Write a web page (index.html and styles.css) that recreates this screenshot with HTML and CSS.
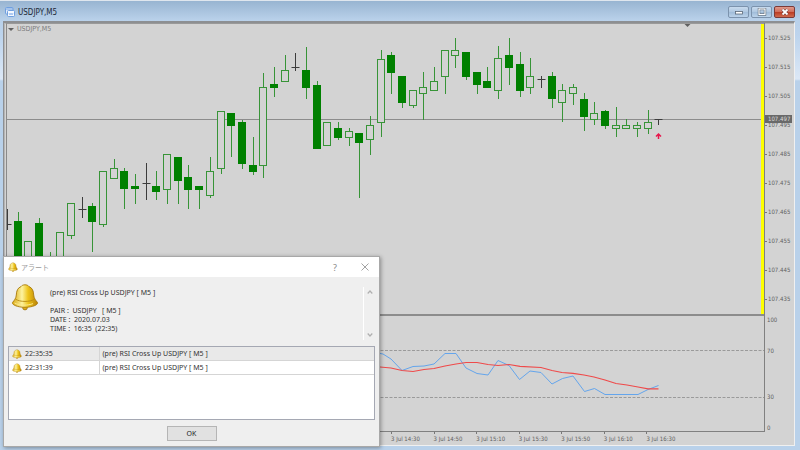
FILE: index.html
```html
<!DOCTYPE html>
<html lang="ja">
<head>
<meta charset="utf-8">
<title>USDJPY,M5</title>
<link rel="stylesheet" href="styles.css">
</head>
<body>
<svg class="defs" aria-hidden="true">
  <defs>
    <linearGradient id="gold" x1="0" x2="1">
      <stop offset="0" stop-color="#d9a60c"/>
      <stop offset=".38" stop-color="#fdf3a0"/>
      <stop offset=".62" stop-color="#eec41a"/>
      <stop offset="1" stop-color="#b98207"/>
    </linearGradient>
    <symbol id="bell" viewBox="0 0 28 28">
      <circle cx="14" cy="24.5" r="2.4" fill="#e0ac14" stroke="#9a6d0a" stroke-width=".8"/>
      <path d="M10 3.6C11.5 1.2 16.5 1.2 18 3.6C21.5 5 22.5 8 22.7 12C23 15.500 24.500 17 26.500 19.500C27.500 21.500 22 24.300 14 24.300C6 24.300 .5 21.500 1.500 19.500C3.500 17 5 15.500 5.300 12C5.500 8 6.500 5 10 3.600Z" fill="url(#gold)" stroke="#a87a10" stroke-width=".9"/>
      <path d="M4.600 16.200C9 19.200 19 19.200 23.400 16.200" fill="none" stroke="#b98a12" stroke-width=".9"/>
      <path d="M3.500 20C9 22.800 17 22.600 22 20.600" fill="none" stroke="#fbe88a" stroke-width="1"/>
    </symbol>
  </defs>
</svg>

<main class="window">
  <header class="titlebar">
    <svg class="app-icon" viewBox="0 0 10 10" aria-hidden="true">
      <rect x=".5" y=".5" width="7.500" height="6.500" rx="1" fill="#dfeafa" stroke="#6f9fdf"/>
      <path d="M1 2H8" stroke="#6f9fdf"/>
      <rect x="2.500" y="3.500" width="7" height="6" rx="1" fill="#f4f8ff" stroke="#6f9fdf"/>
      <path d="M4 6L5 8L6 6L7 8L8 6" fill="none" stroke="#8db4ea" stroke-width=".8"/>
    </svg>
    <h1>USDJPY,M5</h1>
    <div class="controls">
      <button type="button" aria-label="Minimize"><svg viewBox="0 0 10 8"><rect x="1.500" y="3.500" width="7" height="2.500" fill="#fff" stroke="#596675" stroke-width=".8"/></svg></button>
      <button type="button" aria-label="Maximize"><svg viewBox="0 0 10 8"><rect x="2" y="1" width="6" height="5.500" fill="none" stroke="#596675" stroke-width="2.400"/><rect x="2" y="1" width="6" height="5.500" fill="none" stroke="#fff" stroke-width="1.200"/></svg></button>
      <button type="button" class="close" aria-label="Close"><svg viewBox="0 0 10 8"><path d="M2.500 1.500L7.500 6.500M7.500 1.500L2.500 6.500" stroke="#6b3a3a" stroke-width="3"/><path d="M2.500 1.500L7.500 6.500M7.500 1.500L2.500 6.500" stroke="#fff" stroke-width="1.800"/></svg></button>
    </div>
  </header>

  <section class="frame">
    <div class="plot price">
      <svg id="price-plot" viewBox="7 24 757 290" preserveAspectRatio="xMinYMin meet" role="img" aria-label="USDJPY M5 candlesticks"></svg>
      <div class="symbol"><i></i>USDJPY,M5</div>
    </div>
    <ol class="scale prices">
      <li>107.525</li><li>107.515</li><li>107.505</li>
      <li>107.495<b>107.497</b></li>
      <li>107.485</li><li>107.475</li><li>107.465</li><li>107.455</li><li>107.445</li><li>107.435</li>
    </ol>
    <div class="plot rsi">
      <svg viewBox="7 316 757 116" preserveAspectRatio="xMinYMin meet" role="img" aria-label="RSI and moving average">
        <path d="M7 350.500H764M7 397.500H764" stroke="#9a9a9a" stroke-dasharray="3 1.500" fill="none"/>
        <polyline fill="none" stroke="#64a5ec" points="372,352 383,354 391,359 402,370.500 413,366.500 424,366 434,364 445,353.500 456,353.500 466,368 477,373.500 488,375 498,360.500 509,365.500 519.500,379.500 530,371 541,372.500 552,384 562.500,378.500 573,376 584.500,391.500 594.500,388.500 605,394.500 638,394.500 648,389.500 658.500,385.500"/>
        <polyline fill="none" stroke="#ef4a4a" stroke-width="1.200" points="372,366.500 380,367 391,368 402,370.500 413,371.500 424,369.500 434,368.500 445,366 456,364 466,362.500 477,362.500 488,364.500 498,365.500 509,364.500 520,366.300 541,367.500 552,370.500 562,372.500 573,373.300 584,375 594,377 605,380 616,383.500 627,385 638,387 648,388.800 658.500,388.800"/>
      </svg>
    </div>
    <ol class="scale levels"><li>100</li><li>70</li><li>30</li><li>0</li></ol>
    <ol class="times">
      <li>3 Jul 14:30</li><li>3 Jul 14:50</li><li>3 Jul 15:10</li><li>3 Jul 15:30</li><li>3 Jul 15:50</li><li>3 Jul 16:10</li><li>3 Jul 16:30</li>
    </ol>
  </section>
</main>

<section class="dialog" role="dialog" aria-labelledby="alert-title">
  <header>
    <svg class="bell-small"><use href="#bell"/></svg>
    <h2 id="alert-title">アラート</h2>
    <button type="button" class="help" aria-label="Help">?</button>
    <button type="button" class="dismiss" aria-label="Close"><svg viewBox="0 0 8 8"><path d="M.5 .5L7.500 7.500M7.500 .5L.5 7.500" stroke="#999" stroke-width=".9"/></svg></button>
  </header>
  <div class="message">
    <svg class="bell-large"><use href="#bell"/></svg>
    <pre>(pre) RSI Cross Up USDJPY [ M5 ]

PAIR :  USDJPY   [ M5 ]
DATE :  2020.07.03
TIME :  16:35  (22:35)</pre>
    <div class="scroller">
      <button type="button" aria-label="Scroll up"><svg viewBox="0 0 6 4"><path d="M.7 3.500L3 1L5.300 3.500" fill="none" stroke="#b0b0b0" stroke-width="1.200"/></svg></button>
      <button type="button" aria-label="Scroll down"><svg viewBox="0 0 6 4"><path d="M.7 .5L3 3L5.300 .5" fill="none" stroke="#b0b0b0" stroke-width="1.200"/></svg></button>
    </div>
  </div>
  <div class="log">
    <table>
      <tr class="selected"><td><div class="stamp"><svg class="bell-small"><use href="#bell"/></svg>22:35:35</div></td><td>(pre) RSI Cross Up USDJPY [ M5 ]</td></tr>
      <tr><td><div class="stamp"><svg class="bell-small"><use href="#bell"/></svg>22:31:39</div></td><td>(pre) RSI Cross Up USDJPY [ M5 ]</td></tr>
    </table>
  </div>
  <button type="button" class="ok">OK</button>
</section>
<script src="chart.js"></script>
</body>
</html>
```
FILE: styles.css
```css
* { box-sizing: border-box; }
body {
  margin: 0;
  font: 7px/9px "Noto Sans", "Noto Sans CJK JP", sans-serif;
  color: #333;
}
h1, h2, ol, pre { margin: 0; padding: 0; font: inherit; }
ol { list-style: none; }
button { padding: 0; font: inherit; display: flex; align-items: center; justify-content: center; }
svg { display: block; }
.defs { position: absolute; width: 0; height: 0; }

.window {
  min-height: 100vh;
  display: flex;
  flex-direction: column;
  padding: 0 5px 4px 3px;
  border-top: 1px solid #dfe6ee;
  background: linear-gradient(#98b4d1 0, #b9d1ea 19px, #bdd4ed 35px, #dce8f6 78px, #b9d1ea 80px);
}
.titlebar { display: flex; align-items: center; height: 20px; padding: 2px 0 0 2px; gap: 3px; }
.titlebar h1 { flex: 1; font: 8px/9px "DejaVu Sans Condensed", sans-serif; color: #1c2938; }
.app-icon { width: 10px; height: 10px; }
.controls { display: flex; gap: 2px; }
.controls button {
  width: 21px;
  height: 12px;
  border: 1px solid #7c93ad;
  border-radius: 2px;
  background: linear-gradient(#c9dbee, #aec7e0 50%, #9fbbd8 50%, #bcd3ea);
}
.controls svg { width: 10px; height: 8px; }
.controls .close { border-color: #7b3a38; background: linear-gradient(#e09a8b, #cf6a58 50%, #ba3a22 50%, #d06a4e); }

.frame {
  flex: 1;
  display: grid;
  grid-template-columns: 1fr 30px;
  grid-template-rows: 1fr 118px 13px;
  background: #d3d3d3;
  border: 1px solid #8d8f92;
  border-top-width: 2px;
  border-right-color: #f0f0f0;
  border-bottom-color: #f0f0f0;
  padding-left: 2px;
  box-shadow: inset 1px 1px #b5b5b5;
  font: 6px/8px "DejaVu Sans Condensed", sans-serif;
}
.plot { position: relative; min-width: 0; min-height: 0; overflow: hidden; border-left: 1px solid #8a8a8a; }
.plot svg { width: 100%; }
.price { border-top: 1px solid #999; }
.rsi { border-top: 2px solid #8c8c8c; border-bottom: 1px solid #808080; }
.symbol { position: absolute; left: 1px; top: 1px; display: flex; align-items: center; gap: 3px; font-size: 7px; color: #7c7c7c; }
.symbol i { border: 3px solid transparent; border-top-color: #606060; border-bottom: 0; }

.scale { color: #606060; border-left: 1px solid #808080; }
.prices { display: flex; flex-direction: column; }
.prices li { position: relative; flex: 1; display: flex; align-items: center; padding-left: 3px; }
.prices li::before { content: ""; position: absolute; left: 0; top: 50%; width: 2px; height: 1px; background: #777; }
.prices b { position: absolute; left: 0; top: 5px; height: 8px; padding: 0 2px 0 3px; background: #696969; color: #ddd; font-weight: normal; }
.levels { display: grid; grid-template-rows: 8fr 54fr 38fr 16fr; padding: 2px 0 0 2px; }
.levels li { display: flex; align-items: center; }
.levels li:last-child { align-items: end; }
.times { display: grid; grid-template-columns: repeat(7, 1fr); padding: 0 75px 0 385px; color: #606060; white-space: nowrap; }
.times li { position: relative; padding-top: 3px; }
.times li::before { content: ""; position: absolute; left: 0; top: 0; width: 1px; height: 2px; background: #777; }

.dialog {
  position: absolute;
  left: 3px;
  bottom: 3px;
  width: 377px;
  display: flex;
  flex-direction: column;
  padding-bottom: 5px;
  background: #efefef;
  border: 1px solid #a8a8a8;
  box-shadow: 1px 1px 4px rgba(0, 0, 0, .35);
}
.dialog header { display: flex; align-items: center; height: 20px; padding: 0 4px; background: #fff; }
.dialog h2 { flex: 1; padding-left: 3px; color: #999; }
.dialog button { border: 0; background: none; color: #888; }
.dialog .help { width: 20px; height: 16px; margin-right: 10px; font-size: 9px; }
.dialog .dismiss { width: 20px; height: 16px; }
.dismiss svg { width: 8px; height: 8px; }
.bell-small { width: 10px; height: 10px; }
.bell-large { width: 28px; height: 28px; margin-top: 6px; }
.message { display: flex; height: 69px; padding: 0 4px 0 7px; }
.message pre { flex: 1; padding: 11px 0 0 11px; }
.scroller { display: flex; flex-direction: column; justify-content: space-between; width: 12px; height: 53px; margin-top: 10px; padding: 3px 0; border-left: 1px solid #fff; }
.scroller svg { width: 6px; height: 4px; }
.log { height: 74px; margin: 0 4px; border: 1px solid #a5a8b3; background: #fff; }
.log table { width: 100%; border-collapse: collapse; }
.log tr { border-bottom: 1px solid #d5d5d5; }
.log td { padding: 0 3px; }
.log td:first-child { width: 90px; border-right: 1px solid #d5d5d5; }
.stamp { display: flex; align-items: center; gap: 3px; height: 13px; }
.log .selected { background: #e9e9e9; }
.dialog .ok { align-self: center; width: 50px; height: 15px; margin-top: 6px; border: 1px solid #b5b5b5; background: #e1e1e1; color: #222; }
```
FILE: chart.js
```js
// Each bar: kind (g = down, w = up, k = doji), high, body top, body bottom, low.
const bars = [
  ["k",209,224,224,230],["g",212,221,290,290],["w",241,241,290,290],["g",218,223,290,290],
  ["w",252,262,290,290],["w",232,232,290,290],["w",203,203,235,239],["k",197,209,209,218],
  ["g",203,206,222,252],["w",171,171,224,227],["w",159,168,178,178],["g",168,171,189,209],
  ["g",174,186,189,204],["k",163,183,183,200],["g",171,186,192,200],["w",154,154,189,204],
  ["g",157,157,181,204],["g",165,177,190,209],["g",186,186,190,209],["w",157,171,195,198],
  ["w",111,111,168,174],["g",113,113,126,157],["g",120,122,164,169],["g",137,165,172,175],
  ["w",73,87,165,178],["g",67,84,88,97],["w",55,70,81,81],["k",53,67,67,71],
  ["g",47,70,88,99],["g",81,85,149,149],["w",122,122,145,145],["g",122,128,138,140],
  ["w",128,131,137,146],["g",133,133,143,198],["w",116,125,139,155],["w",50,59,122,137],
  ["g",52,55,73,94],["g",76,76,103,108],["w",90,90,105,108],["w",72,87,93,120],
  ["w",67,81,90,90],["w",50,50,76,94],["w",38,50,55,68],["g",52,52,77,80],
  ["g",72,72,85,94],["g",67,81,88,88],["w",46,58,90,99],["g",38,55,68,85],
  ["g",52,64,91,97],["w",58,76,87,94],["k",76,79,79,88],["g",72,76,99,108],
  ["w",84,90,102,122],["w",84,87,93,105],["g",93,99,117,131],["w",102,113,119,125],
  ["g",110,111,126,129],["w",107,125,128,137],["w",119,125,128,128],["w",122,125,128,137],
  ["w",110,122,128,134],["k",119,119,119,125]
];
const step = 10.68;
let out = '<path d="M7 119.5H761" stroke="#8c8c8c"/>';
bars.forEach(([kind, high, top, bottom, low], i) => {
  const x = Math.floor(7.4 + i * step) + 0.5;
  if (kind === "k") {
    out += `<path d="M${x} ${high}V${low}M${x - 4} ${top + 0.5}H${x + 4}" stroke="#3c3c3c" fill="none"/>`;
    return;
  }
  out += `<path d="M${x} ${high}V${top}M${x} ${bottom}V${low}" stroke="#379437"/>`;
  out += kind === "g"
    ? `<rect x="${x - 4.5}" y="${top}" width="8" height="${bottom - top}" fill="#008000"/>`
    : `<rect x="${x - 4}" y="${top + 0.5}" width="7" height="${bottom - top}" fill="#d3d3d3" stroke="#379437"/>`;
});
out += '<path d="M658.5 139V134M656 136.500L658.500 134L661 136.500" stroke="#e8164c" stroke-width="1.5" fill="none"/>';
out += '<path d="M684 23.500H691L687.500 27Z" fill="#606060"/>';
out += '<rect x="761" y="23" width="3" height="292" fill="#ff0"/>';
document.getElementById("price-plot").innerHTML = out;
```
